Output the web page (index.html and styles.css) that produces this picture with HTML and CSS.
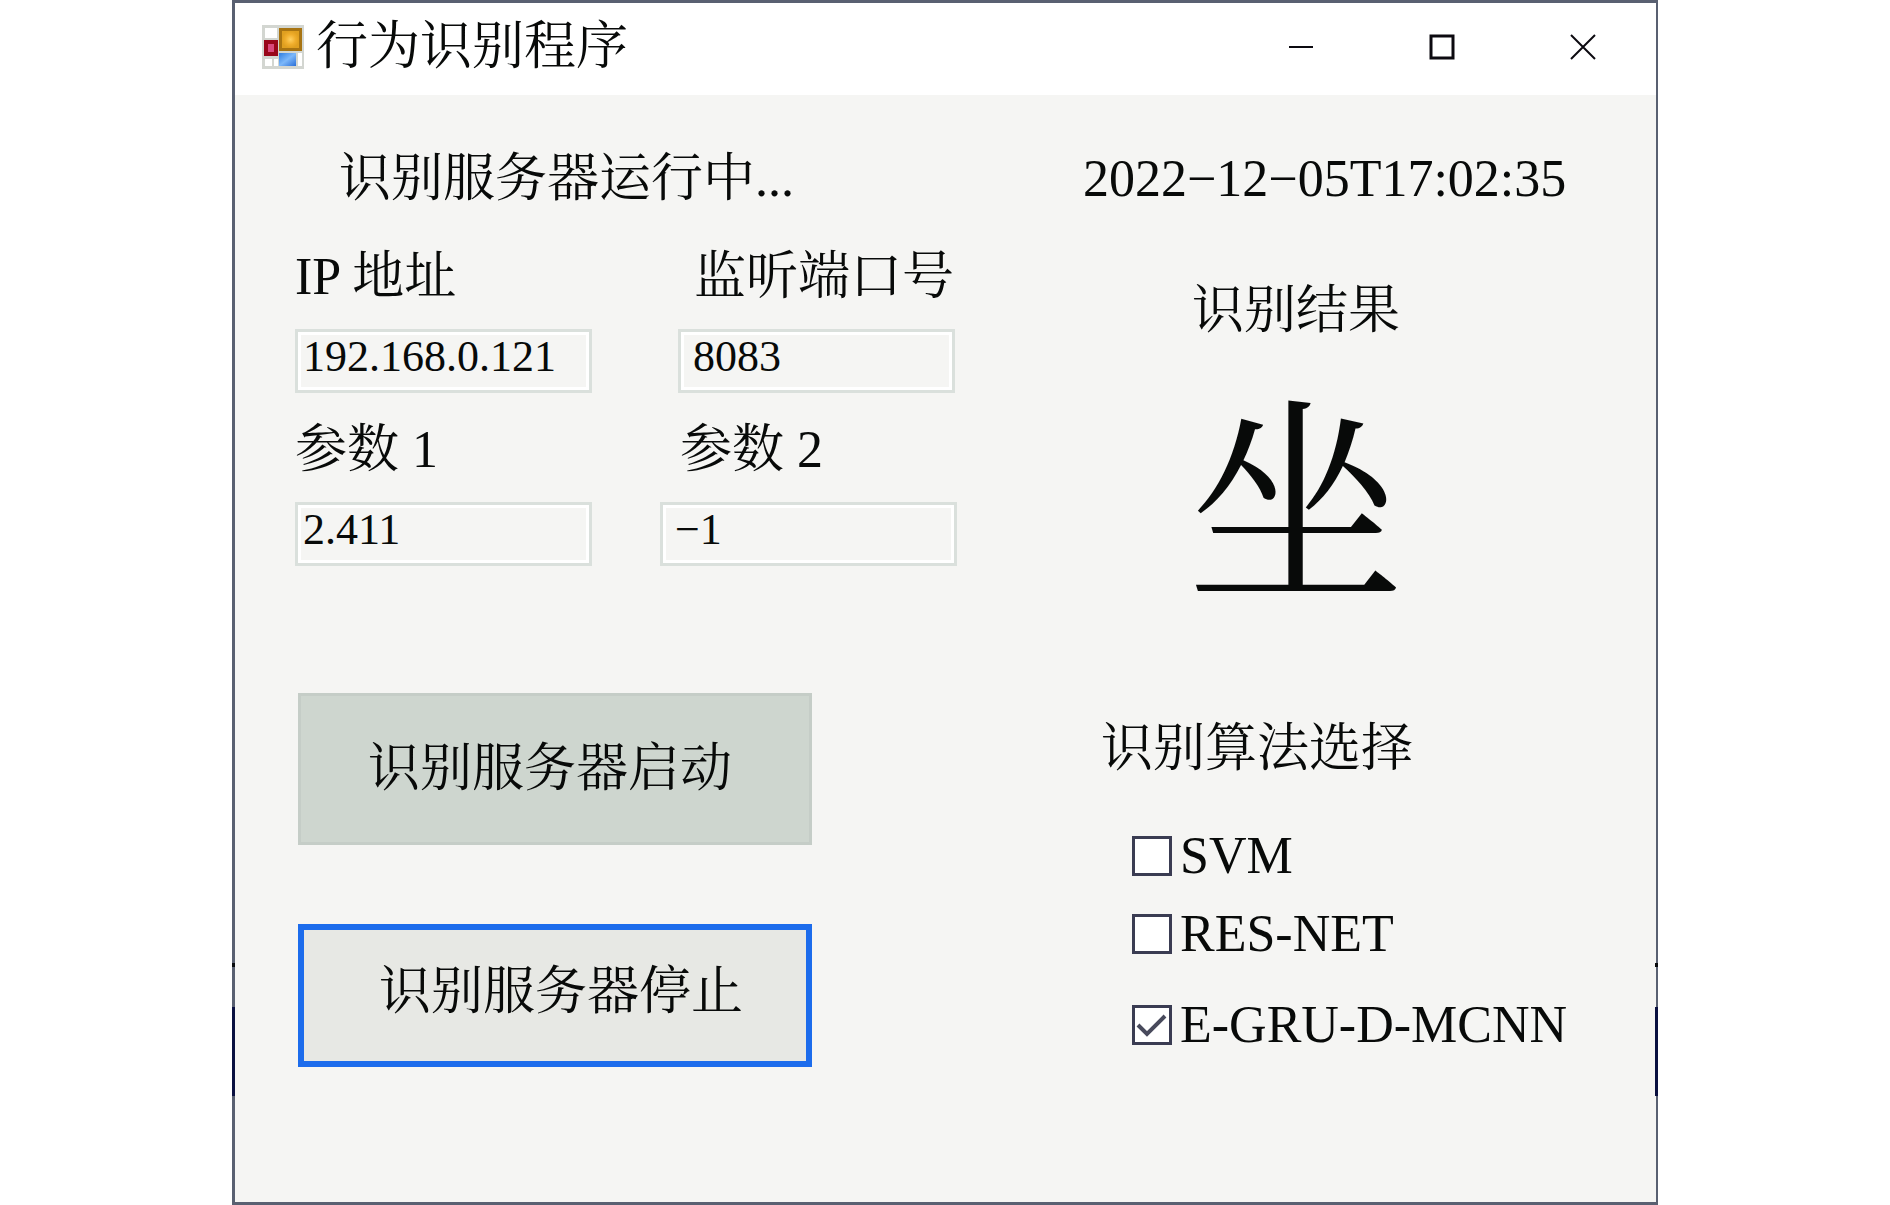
FILE: index.html
```html
<!DOCTYPE html>
<html lang="zh-CN">
<head>
<meta charset="utf-8">
<meta name="viewport" content="width=device-width, initial-scale=1">
<title>行为识别程序</title>
<link rel="stylesheet" href="styles.css">
</head>
<body>
<div class="window">
  <header class="titlebar">
    <svg class="app-icon" viewBox="0 0 42 44" aria-hidden="true">
      <defs>
        <radialGradient id="gold"><stop offset="0" stop-color="#ffd060"/><stop offset=".6" stop-color="#f0ae2c"/><stop offset="1" stop-color="#e0a020"/></radialGradient>
        <linearGradient id="blue" x1="0" y1="0" x2="1" y2="1"><stop offset="0" stop-color="#2f7de0"/><stop offset=".5" stop-color="#7db8fa"/><stop offset="1" stop-color="#2a6fd8"/></linearGradient>
      </defs>
      <rect width="42" height="44" fill="#d3d6d1"/>
      <rect x="3" y="3" width="12" height="10" fill="#fff"/>
      <rect x="3" y="34" width="7" height="7" fill="#fff"/>
      <rect x="12" y="34" width="4" height="7" fill="#fff"/>
      <rect x="36" y="28" width="4" height="13" fill="#fff"/>
      <rect x="17" y="3" width="23" height="23" fill="#a87412"/>
      <rect x="20" y="6" width="17" height="17" fill="url(#gold)"/>
      <rect x="2" y="15" width="14" height="16" fill="#98061a"/>
      <rect x="6" y="19" width="6" height="8" fill="#d8487c"/>
      <rect x="17" y="28" width="17" height="13" fill="url(#blue)"/>
    </svg>
    <h1 class="title">行为识别程序</h1>
    <div class="window-buttons">
      <button class="window-button" type="button" aria-label="最小化"><svg width="26" height="26" viewBox="0 0 26 26"><path d="M1 13H25"/></svg></button>
      <button class="window-button" type="button" aria-label="最大化"><svg width="26" height="26" viewBox="0 0 26 26"><path class="thick" d="M2 2H24V24H2Z"/></svg></button>
      <button class="window-button" type="button" aria-label="关闭"><svg width="26" height="26" viewBox="0 0 26 26"><path d="M1 1L25 25M25 1L1 25"/></svg></button>
    </div>
  </header>

  <main class="content">
    <section class="server">
      <p class="status">识别服务器运行中...</p>
      <div class="field-row">
        <div class="field">
          <label for="ip">IP 地址</label>
          <input id="ip" type="text" value="192.168.0.121">
        </div>
        <div class="field field-port">
          <label for="port">监听端口号</label>
          <input id="port" type="text" value="8083">
        </div>
      </div>
      <div class="field-row">
        <div class="field">
          <label for="param1">参数 1</label>
          <input id="param1" type="text" value="2.411">
        </div>
        <div class="field field-param">
          <label for="param2">参数 2</label>
          <input id="param2" type="text" value="−1">
        </div>
      </div>
      <div class="actions">
        <button class="action action-start" type="button">识别服务器启动</button>
        <button class="action action-stop" type="button">识别服务器停止</button>
      </div>
    </section>

    <section class="recognition">
      <time class="clock" datetime="2022-12-05T17:02:35">2022−12−05T17:02:35</time>
      <div class="result">
        <h2 class="heading">识别结果</h2>
        <output class="result-value">坐</output>
      </div>
      <fieldset class="algorithms">
        <legend class="heading">识别算法选择</legend>
        <label class="option"><input type="checkbox"><span>SVM</span></label>
        <label class="option"><input type="checkbox"><span>RES-NET</span></label>
        <label class="option option-last"><input type="checkbox" checked><span>E-GRU-D-MCNN</span></label>
      </fieldset>
    </section>
  </main>
</div>
</body>
</html>
```

FILE: styles.css
```css
* {
  box-sizing: border-box;
}

body {
  margin: 0;
  padding: 0 232px;
  background: #fff;
  color: #080a09;
  font-family: "Liberation Serif", "Noto Serif CJK SC", "Noto Sans CJK SC", serif;
  font-size: 52px;
  font-weight: 400;
  line-height: 60px;
}

input,
button {
  margin: 0;
  color: inherit;
  font: inherit;
}

.window {
  position: relative;
  display: flex;
  flex-direction: column;
  min-height: 100vh;
  border: solid #596071;
  border-width: 3px 2px 3px 3px;
  background: #f5f5f3;
}

/* Dark marks along the side borders */
.window::before,
.window::after {
  content: "";
  position: absolute;
  bottom: 106px;
  width: 3px;
  height: 133px;
  background: linear-gradient(#080a0c 4px, transparent 4px 44px, #0a1040 44px);
}

.window::before {
  left: -3px;
}

.window::after {
  right: -2px;
}

.titlebar {
  display: flex;
  align-items: center;
  height: 92px;
  padding: 0 3px 4px 27px;
  background: #fff;
}

.app-icon {
  width: 42px;
  height: 44px;
}

.title {
  margin: 0 auto 0 12px;
  font-size: 52px;
  font-weight: 400;
}

.window-buttons {
  display: flex;
}

.window-button {
  display: grid;
  place-items: center;
  width: 141px;
  height: 88px;
  padding: 0;
  border: 0;
  background: none;
}

.window-button path {
  fill: none;
  stroke: #0c0a10;
  stroke-width: 2;
}

.window-button .thick {
  stroke-width: 3;
}

.content {
  display: flex;
  justify-content: space-between;
  padding: 54px 83px 60px 60px;
}

.server {
  width: 662px;
}

.status {
  margin: 0 0 38px;
  padding-left: 44px;
}

.field-row {
  display: flex;
  justify-content: space-between;
  margin-bottom: 27px;
}

.field {
  display: flex;
  flex-direction: column;
  gap: 22px;
  width: 297px;
}

.field input {
  width: 100%;
  height: 64px;
  padding: 0 4px 10px 5px;
  border: 3px solid #dae0dc;
  outline: 0;
  background: #f5f5f3;
  box-shadow: inset 0 0 0 3px #fff;
  font-size: 44px;
}

.field-port {
  width: 277px;
  margin-right: 2px;
}

.field-port label {
  padding-left: 16px;
}

.field-param label {
  padding-left: 20px;
}

.field-port input,
.field-param input {
  padding-left: 12px;
}

.actions {
  display: flex;
  flex-direction: column;
  gap: 79px;
  width: 514px;
  margin: 127px 0 0 3px;
}

.action {
  height: 152px;
  padding: 0 10px 0 0;
  border: 3px solid #c5cdc7;
  background: #ced6cf;
}

.action-stop {
  height: 143px;
  padding: 0 0 8px 12px;
  border: 6px solid #1c6cec;
  background: #e7e8e4;
}

.recognition {
  width: 490px;
}

.clock {
  display: block;
}

.heading {
  margin: 0;
  padding: 0;
  font-size: 52px;
  font-weight: 400;
}

.result {
  width: 426px;
  margin: 72px 0 99px;
  text-align: center;
}

.result-value {
  display: block;
  margin-top: 59px;
  font-size: 218px;
  line-height: 220px;
}

.algorithms {
  margin: 0 0 0 18px;
  padding: 0 0 0 31px;
  border: 0;
}

.algorithms .heading {
  margin: 0 0 47px -31px;
}

.option {
  display: flex;
  align-items: center;
  gap: 8px;
  margin-bottom: 18px;
}

.option-last {
  margin: 31px 0 0;
}

.option input {
  appearance: none;
  width: 40px;
  height: 40px;
  border: 3px solid #3a3c52;
  background: #fff;
}

.option input:checked {
  background: #fff url("data:image/svg+xml,%3Csvg xmlns='http://www.w3.org/2000/svg' viewBox='0 0 34 34'%3E%3Cpath d='M3 17L12 26L30 8' fill='none' stroke='%23484a5c' stroke-width='4'/%3E%3C/svg%3E") center / 34px 34px;
}
```
